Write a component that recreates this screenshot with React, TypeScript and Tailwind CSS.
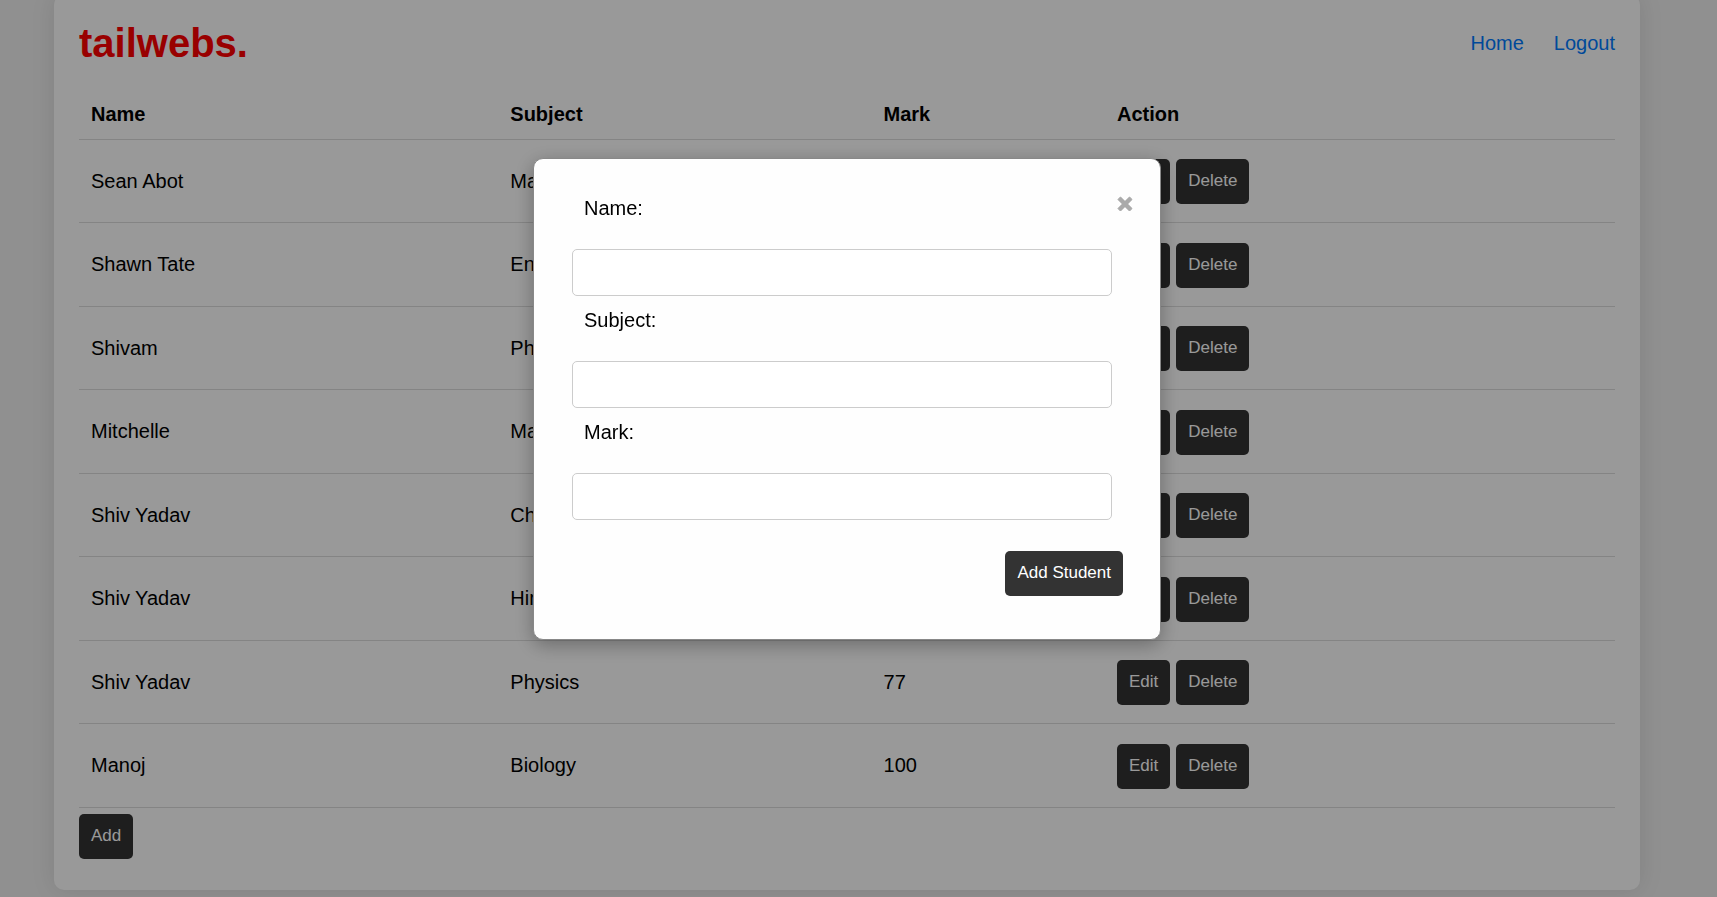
import { useState } from "react";

type Student = { name: string; subject: string; mark: number };

const students: Student[] = [
  { name: "Sean Abot", subject: "Maths", mark: 85 },
  { name: "Shawn Tate", subject: "English", mark: 78 },
  { name: "Shivam", subject: "Physics", mark: 90 },
  { name: "Mitchelle", subject: "Maths", mark: 72 },
  { name: "Shiv Yadav", subject: "Chemistry", mark: 81 },
  { name: "Shiv Yadav", subject: "Hindi", mark: 68 },
  { name: "Shiv Yadav", subject: "Physics", mark: 77 },
  { name: "Manoj", subject: "Biology", mark: 100 },
];

const fields = ["Name", "Subject", "Mark"];

function Button({ children, onClick }: { children: string; onClick?: () => void }) {
  return (
    <button
      type="button"
      onClick={onClick}
      className="h-[45px] rounded-[5px] bg-[#333] px-3 pb-px text-[17px] leading-5 text-white"
    >
      {children}
    </button>
  );
}

function AddDialog({ onClose }: { onClose: () => void }) {
  return (
    <div className="fixed inset-0 z-10 bg-black/40 pr-[23px] pt-[158px]">
      <form
        role="dialog"
        aria-label="Add Student"
        onSubmit={(e) => e.preventDefault()}
        className="relative mx-auto flex w-full max-w-[628px] flex-col rounded-[10px] border border-[#888] bg-[#fefefe] pb-[43px] pl-[38px] pr-12 pt-[31px] shadow-[0_5px_19px_rgba(0,0,0,0.3)]"
      >
        <button
          type="button"
          aria-label="Close"
          onClick={onClose}
          className="absolute right-[27px] top-[37px] text-[#aaa]"
        >
          <svg className="block size-4" viewBox="0 0 16 16" fill="none" stroke="currentColor">
            <path d="M2.6 2.6 13.4 13.4M13.4 2.6 2.6 13.4" strokeWidth="4" />
            <path
              d="M1 3.4 3.4 1 8 5.6 12.6 1 15 3.4 10.4 8 15 12.6 12.6 15 8 10.4 3.4 15 1 12.6 5.6 8Z"
              fill="currentColor"
              strokeWidth="1"
              strokeLinejoin="round"
            />
          </svg>
        </button>
        {fields.map((field) => (
          <div key={field} className="mb-[6px] flex flex-col">
            <label htmlFor={field} className="mb-[27px] px-3 pt-1 text-[20px] leading-7 text-black">
              {field}:
            </label>
            <input
              id={field}
              className="h-[47px] w-full rounded-[5px] border border-[#ccc] bg-white px-3 text-[17px] outline-none"
            />
          </div>
        ))}
        <div className="-mr-[11px] mt-[25px] flex justify-end">
          <Button>Add Student</Button>
        </div>
      </form>
    </div>
  );
}

export default function App() {
  const [open, setOpen] = useState(true);
  return (
    <div className="min-h-screen overflow-hidden bg-[#f0f0f0] pb-[7px] pr-[23px] font-['Liberation_Sans',Arial,sans-serif] text-[20px] text-black">
      <main className="mx-[54px] -mt-[5px] rounded-[10px] bg-white px-[25px] pb-[31px] pt-[25px] shadow-[0_0_25px_rgba(0,0,0,0.1)]">
        <header className="flex h-[46px] items-center justify-between">
          <h1 className="text-[40px] font-bold leading-[46px] text-[#f00]">tailwebs.</h1>
          <nav className="flex gap-[30px] leading-6 text-[#007bff]">
            <a href="#home">Home</a>
            <a href="#logout">Logout</a>
          </nav>
        </header>
        <table className="mt-6 w-full table-fixed border-collapse text-left">
          <thead>
            <tr className="h-[49px] border-b border-[#ddd]">
              <th className="w-[27.3%] px-3">Name</th>
              <th className="w-[24.3%] px-3">Subject</th>
              <th className="w-[15.2%] px-3">Mark</th>
              <th className="px-3">Action</th>
            </tr>
          </thead>
          <tbody>
            {students.map((s, i) => (
              <tr key={i} className="border-b border-[#ddd] odd:h-[83px] even:h-[84px]">
                <td className="px-3">{s.name}</td>
                <td className="px-3">{s.subject}</td>
                <td className="px-3">{s.mark}</td>
                <td className="px-3 pt-[2px]">
                  <div className="flex gap-[6px]">
                    <Button>Edit</Button>
                    <Button>Delete</Button>
                  </div>
                </td>
              </tr>
            ))}
          </tbody>
        </table>
        <div className="mt-[6px] flex">
          <Button onClick={() => setOpen(true)}>Add</Button>
        </div>
      </main>
      {open && <AddDialog onClose={() => setOpen(false)} />}
    </div>
  );
}
